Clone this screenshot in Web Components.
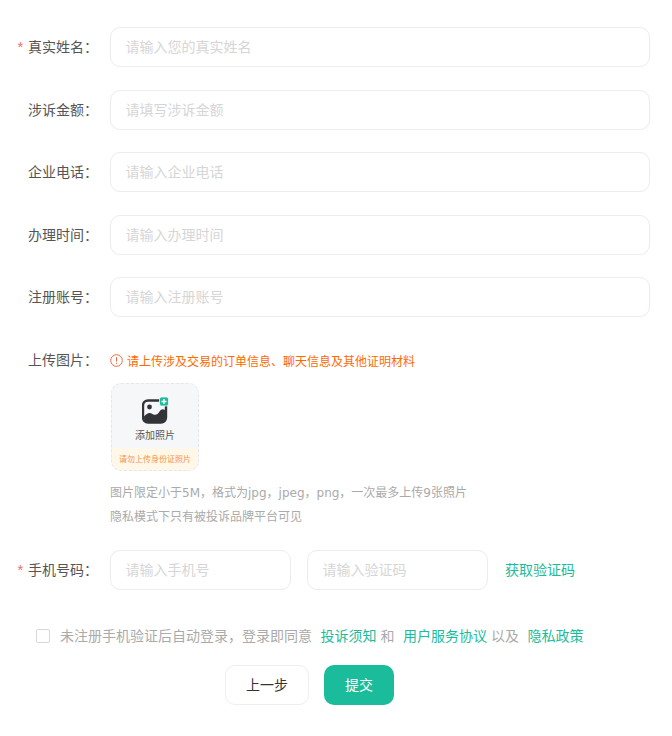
<!DOCTYPE html>
<html lang="zh">
<head>
<meta charset="utf-8">
<title>投诉表单</title>
<style>
  html, body { margin: 0; background: #fff; }
  body { font: 14px/20px "Noto Sans CJK SC", "Liberation Sans", sans-serif; color: #555; }
</style>
</head>
<body>

<complaint-form>
  <form-row label="真实姓名" required><text-field placeholder="请输入您的真实姓名"></text-field></form-row>
  <form-row label="涉诉金额"><text-field placeholder="请填写涉诉金额"></text-field></form-row>
  <form-row label="企业电话"><text-field placeholder="请输入企业电话"></text-field></form-row>
  <form-row label="办理时间"><text-field placeholder="请输入办理时间"></text-field></form-row>
  <form-row label="注册账号"><text-field placeholder="请输入注册账号"></text-field></form-row>
  <form-row label="上传图片" class="upload"><upload-panel></upload-panel></form-row>
  <form-row label="手机号码" required class="phone"><phone-fields></phone-fields></form-row>
  <agree-line></agree-line>
  <form-actions></form-actions>
</complaint-form>

<script>
class ComplaintForm extends HTMLElement {
    constructor() {
        super();
        this.attachShadow({ mode: 'open' });
        this.shadowRoot.innerHTML = `
            <style>
                :host { display: block; padding: 27px 22px 0 0; }
                ::slotted(form-row) { margin-bottom: 22.5px; }
                ::slotted(form-row.upload) { margin-bottom: 20.5px; }
                ::slotted(form-row.phone) { margin-bottom: 0; }
            </style>
            <slot></slot>
        `;
    }
}
customElements.define('complaint-form', ComplaintForm);

class FormRow extends HTMLElement {
    constructor() {
        super();
        this.attachShadow({ mode: 'open' });
    }
    connectedCallback() {
        const star = this.hasAttribute('required') ? '<span class="star">*</span>' : '';
        this.shadowRoot.innerHTML = `
            <style>
                :host { display: flex; align-items: flex-start; }
                .label { box-sizing: border-box; flex: 0 0 110px; height: 40px; padding-left: 28px; line-height: 38px; color: #555; position: relative; white-space: nowrap; }
                .star { position: absolute; left: 17.500px; top: 1px; color: #f56c6c; font: 15px/38px "Liberation Sans", sans-serif; }
                .field { flex: 1; min-width: 0; }
            </style>
            <div class="label">${star}${this.getAttribute('label')}：</div>
            <div class="field"><slot></slot></div>
        `;
    }
}
customElements.define('form-row', FormRow);

class TextField extends HTMLElement {
    constructor() {
        super();
        this.attachShadow({ mode: 'open' });
    }
    connectedCallback() {
        this.shadowRoot.innerHTML = `
            <style>
                :host { display: block; }
                input { box-sizing: border-box; display: block; width: 100%; height: 40px; padding: 0 15px 2px 14.500px; border: 1px solid #ececec; border-radius: 10px; outline: none; background: #fff; font: inherit; color: #555; }
                input::placeholder { color: #d6d6d6; opacity: 1; }
            </style>
            <input type="text" placeholder="${this.getAttribute('placeholder') || ''}">
        `;
    }
}
customElements.define('text-field', TextField);

class UploadPanel extends HTMLElement {
    constructor() {
        super();
        this.attachShadow({ mode: 'open' });
        this.shadowRoot.innerHTML = `
            <style>
                :host { display: block; }
                .tip { display: flex; align-items: center; gap: 4px; height: 20px; margin-top: 11px; font-size: 12px; color: #ff6a00; white-space: nowrap; }
                .tip svg { flex: none; width: 13px; height: 13px; }
                .hint { font: 12px/24px "DejaVu Sans", "Noto Sans CJK SC", sans-serif; color: #aaa; white-space: nowrap; }
                .hint.first { margin-top: 10px; }
                .box { box-sizing: border-box; width: 88px; height: 88px; margin: 12.500px 0 0 1px; border: 1px dashed #e6e6e8; border-radius: 10px; background: #f6f7f9; overflow: hidden; display: flex; flex-direction: column; }
                .main { flex: 1; display: flex; flex-direction: column; align-items: center; padding-top: 13px; box-sizing: border-box; }
                .main svg { width: 27px; height: 27px; display: block; }
                .add { margin-top: 4px; font-size: 10px; line-height: 14px; color: #555; }
                .warn { flex: none; height: 22px; line-height: 21px; background: #fff8e8; color: #f7924a; font-size: 8px; text-align: center; white-space: nowrap; }
            </style>
            <div class="tip">
                <svg viewBox="0 0 13 13" fill="none"><circle cx="6.5" cy="6.5" r="5.8" stroke="#f0663c" stroke-width="1"/><path d="M6.5 3.2v4.3M6.5 8.7v1.1" stroke="#f0663c" stroke-width="1"/></svg>
                <span>请上传涉及交易的订单信息、聊天信息及其他证明材料</span>
            </div>
            <div class="box">
                <div class="main">
                    <svg viewBox="0 0 27 27">
                        <rect x="1" y="3.5" width="23" height="22" rx="5" fill="none" stroke="#333438" stroke-width="2.4"/>
                        <path d="M2 19.5c3-3.5 5.5-4.5 8.5-2.5 3 1.8 5 .6 7-2.5 1.5-2.3 3.5-3 5.5-1.5V21a4 4 0 0 1-4 4H6a4 4 0 0 1-4-4z" fill="#333438"/>
                        <circle cx="7.5" cy="10" r="2.4" fill="#333438"/>
                        <rect x="17.5" y="0" width="9" height="9" rx="2" fill="#1abc9c" stroke="#f6f7f9" stroke-width=".8"/>
                        <path d="M22 2v5M19.5 4.500h5" stroke="#fff" stroke-width="1.300"/>
                    </svg>
                    <div class="add">添加照片</div>
                </div>
                <div class="warn">请勿上传身份证照片</div>
            </div>
            <div class="hint first">图片限定小于5M，格式为jpg，jpeg，png，一次最多上传9张照片</div>
            <div class="hint">隐私模式下只有被投诉品牌平台可见</div>
        `;
    }
}
customElements.define('upload-panel', UploadPanel);

class PhoneFields extends HTMLElement {
    constructor() {
        super();
        this.attachShadow({ mode: 'open' });
        this.shadowRoot.innerHTML = `
            <style>
                :host { display: flex; align-items: center; }
                text-field { flex: 0 0 181px; margin-right: 16px; }
                a { margin: -2px 0 0 1px; color: #1abc9c; white-space: nowrap; text-decoration: none; }
            </style>
            <text-field placeholder="请输入手机号"></text-field>
            <text-field placeholder="请输入验证码"></text-field>
            <a href="#">获取验证码</a>
        `;
    }
}
customElements.define('phone-fields', PhoneFields);

class AgreeLine extends HTMLElement {
    constructor() {
        super();
        this.attachShadow({ mode: 'open' });
        this.shadowRoot.innerHTML = `
            <style>
                :host { display: flex; align-items: center; height: 20px; margin: 36px 0 0 36px; color: #aaa; white-space: nowrap; }
                .check { box-sizing: border-box; flex: none; width: 14px; height: 14px; margin-right: 10px; border: 1px solid #d9d9d9; border-radius: 2px; background: #fff; }
                span.t, a { position: relative; top: -1px; }
                a { margin: 0 4px 0 8.500px; color: #1abc9c; text-decoration: none; }
            </style>
            <span class="check"></span>
            <span class="t">未注册手机验证后自动登录，登录即同意</span>
            <a href="#">投诉须知</a><span class="t">和</span>
            <a href="#">用户服务协议</a><span class="t">以及</span>
            <a href="#">隐私政策</a>
        `;
    }
}
customElements.define('agree-line', AgreeLine);

class FormActions extends HTMLElement {
    constructor() {
        super();
        this.attachShadow({ mode: 'open' });
        this.shadowRoot.innerHTML = `
            <style>
                :host { display: flex; margin: 19px 0 0 225px; gap: 15px; }
                button { box-sizing: border-box; height: 40px; border-radius: 10px; font: inherit; cursor: pointer; padding: 0 0 2px; }
                .back { width: 84px; border: 1px solid #eee; background: #fff; color: #333; }
                .submit { width: 70px; border: 0; background: #1abc9c; color: #fff; }
            </style>
            <button class="back" type="button">上一步</button>
            <button class="submit" type="button">提交</button>
        `;
    }
}
customElements.define('form-actions', FormActions);
</script>
</body>
</html>
